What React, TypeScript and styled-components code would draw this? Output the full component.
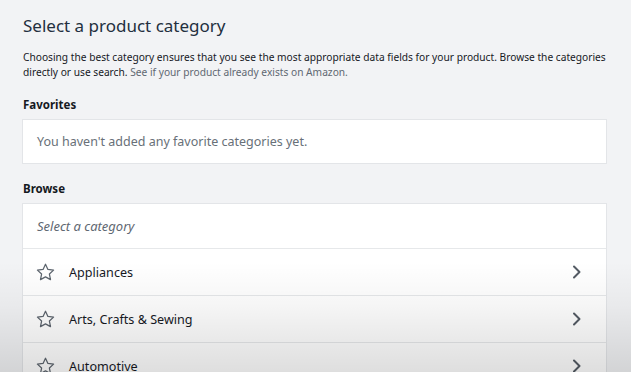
import React from 'react';
import styled, {createGlobalStyle} from 'styled-components';

const GlobalStyle = createGlobalStyle`
  html, body {
    margin: 0;
    padding: 0;
    background: #f2f3f5;
  }
  body {
    font-family: "Noto Sans", "Open Sans", Arial, sans-serif;
    color: #16191f;
  }
`;

const categories = ['Appliances', 'Arts, Crafts & Sewing', 'Automotive'];

const StarIcon = () => (
  <svg width="19" height="18" viewBox="0 0 24 23" fill="none">
    <path
      d="M12 1.6l3.1 6.6 7.2.9-5.3 5 1.4 7.1L12 17.7l-6.4 3.5L7 14.1l-5.3-5 7.2-.9z"
      stroke="#5d656e"
      strokeWidth="1.6"
      strokeLinejoin="round"
    />
  </svg>
);

const ChevronIcon = () => (
  <svg width="10" height="14" viewBox="0 0 10 14" fill="none">
    <path d="M2 1.5l5.5 5.5L2 12.5" stroke="#545b64" strokeWidth="2" strokeLinecap="round" strokeLinejoin="round" />
  </svg>
);

const App = () => {
  return (
    <>
      <GlobalStyle />
      <StPage>
        <StTitle>Select a product category</StTitle>
        <StDescription>
          Choosing the best category ensures that you see the most appropriate data fields for your product. Browse the
          categories directly or use search. <StLink>See if your product already exists on Amazon.</StLink>
        </StDescription>

        <StLabel $gap={18}>Favorites</StLabel>
        <StBox>
          <StEmptyText>You haven't added any favorite categories yet.</StEmptyText>
        </StBox>

        <StLabel $gap={18}>Browse</StLabel>
        <StBox>
          <StPlaceholderRow>Select a category</StPlaceholderRow>
          {categories.map(name => (
            <StCategoryRow key={name}>
              <StStar>
                <StarIcon />
              </StStar>
              <StCategoryName>{name}</StCategoryName>
              <ChevronIcon />
            </StCategoryRow>
          ))}
        </StBox>
        <StShade />
      </StPage>
    </>
  );
};

const StPage = styled.div`
  position: relative;
  height: 372px;
  overflow: hidden;
  padding: 12px 24px 0 22px;
  box-sizing: border-box;
`;

const StTitle = styled.h1`
  margin: 0 0 0 1px;
  font-size: 17px;
  line-height: 28px;
  font-weight: 400;
  color: #232f3e;
`;

const StDescription = styled.p`
  margin: 10px 0 0 1px;
  font-size: 10.2px;
  line-height: 15px;
  color: #16191f;
`;

const StLink = styled.span`
  color: #5f6872;
`;

const StLabel = styled.div<{$gap: number}>`
  margin: ${p => p.$gap}px 0 7px 1px;
  font-size: 11.5px;
  line-height: 14px;
  font-weight: 700;
  color: #16191f;
`;

const StBox = styled.div`
  background: #ffffff;
  border: 1px solid #e3e5e8;
`;

const StEmptyText = styled.div`
  height: 43px;
  display: flex;
  align-items: center;
  padding-left: 14px;
  font-size: 12.5px;
  color: #687078;
`;

const StPlaceholderRow = styled.div`
  height: 44px;
  display: flex;
  align-items: center;
  padding-left: 14px;
  font-size: 13px;
  font-style: italic;
  color: #5f6872;
  border-bottom: 1px solid #e6e8ea;
`;

const StCategoryRow = styled.div`
  height: 46px;
  display: flex;
  align-items: center;
  padding: 0 24px 0 13px;
  border-bottom: 1px solid #e6e8ea;
`;

const StStar = styled.span`
  display: flex;
  width: 19px;
  margin-right: 14px;
`;

const StCategoryName = styled.span`
  flex: 1;
  font-size: 12.6px;
  color: #16191f;
`;

const StShade = styled.div`
  position: absolute;
  left: 0;
  right: 0;
  bottom: 0;
  height: 110px;
  pointer-events: none;
  background: linear-gradient(to bottom, rgba(0, 0, 0, 0) 0%, rgba(0, 0, 0, 0.04) 40%, rgba(0, 0, 0, 0.13) 100%);
`;

export default App;
